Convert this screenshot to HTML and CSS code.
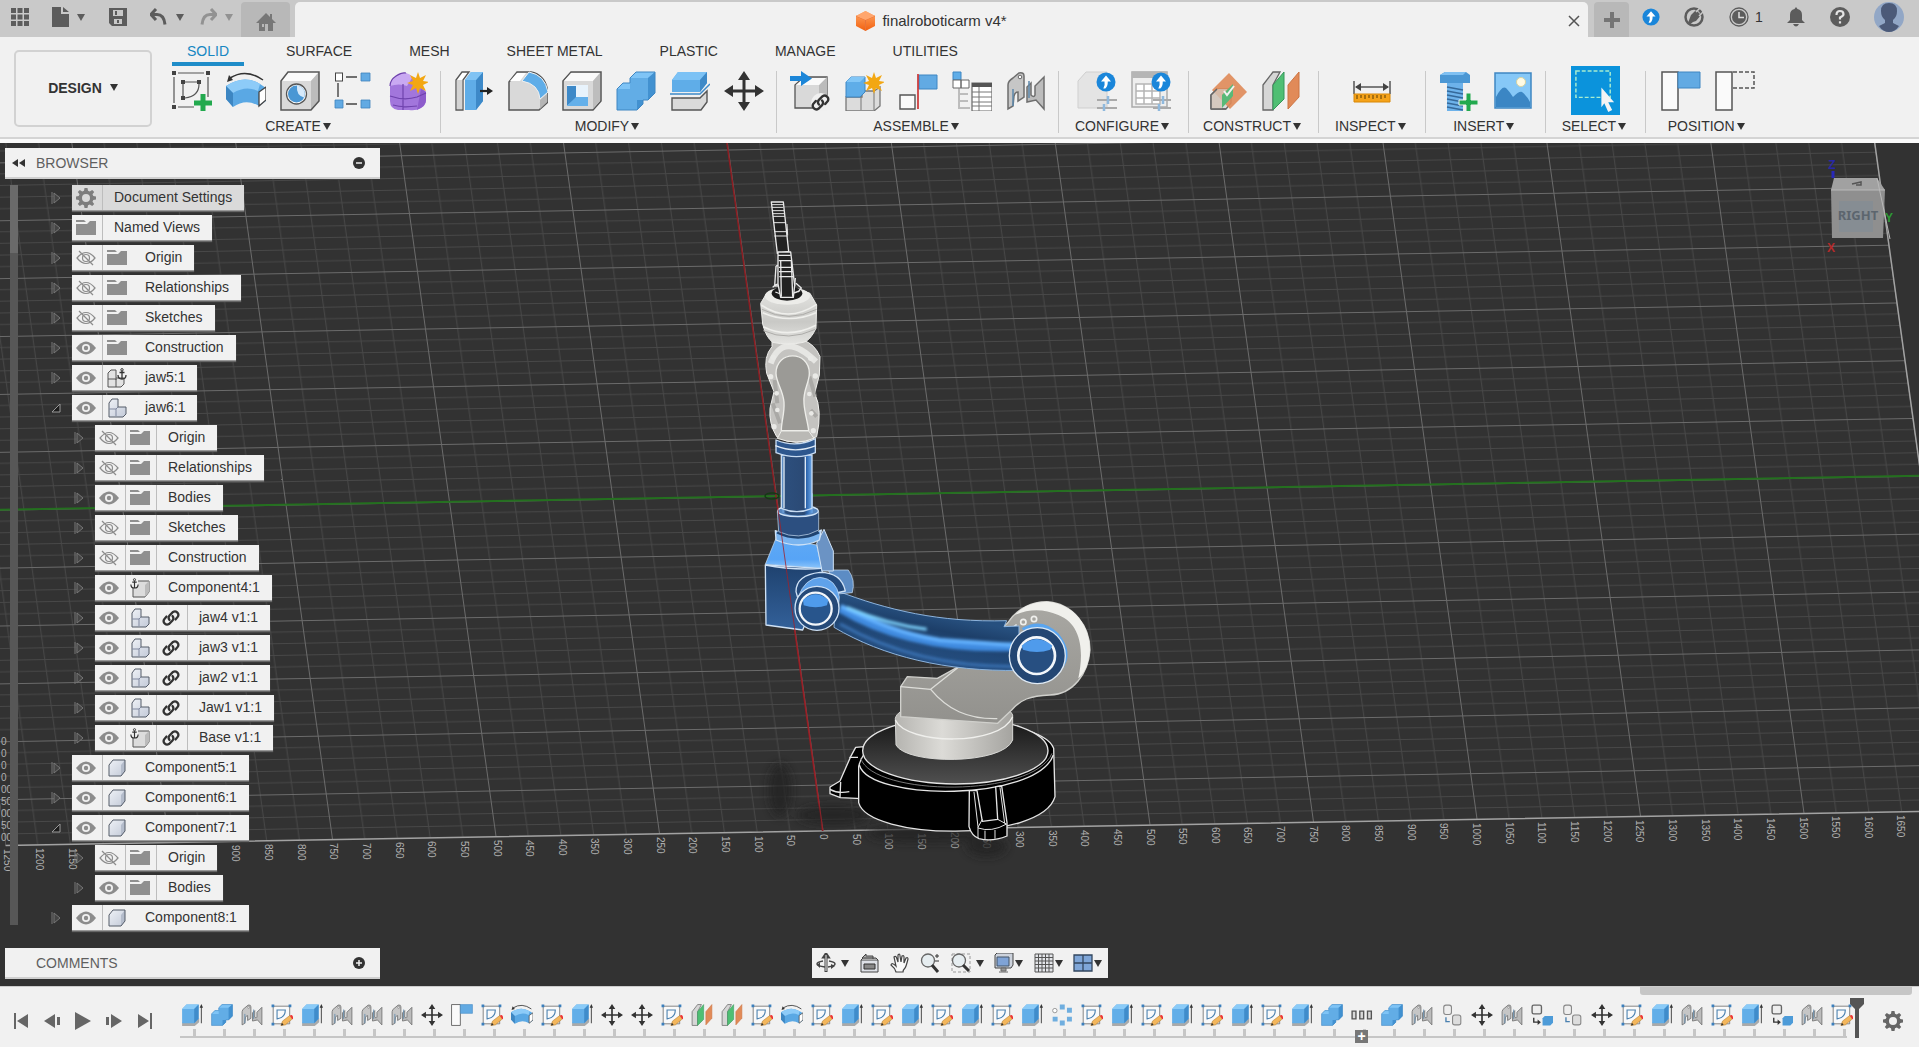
FILE: index.html
```html
<!DOCTYPE html>
<html lang="en">
<head>
<meta charset="utf-8">
<meta name="viewport" content="width=device-width, initial-scale=1">
<title>finalroboticarm v4*</title>
<link rel="stylesheet" href="styles.css">
</head>
<body>

<svg class="defs" aria-hidden="true">
  <defs>
    <linearGradient id="g-orange" x1="0" y1="0" x2="0" y2="1"><stop offset="0" stop-color="#ffa765"/><stop offset="1" stop-color="#f2600f"/></linearGradient>
    <linearGradient id="g-grey" x1="0" y1="0" x2="1" y2="1"><stop offset="0" stop-color="#eef1f6"/><stop offset="1" stop-color="#c3cad8"/></linearGradient>
  </defs>

  <!-- ribbon icons -->
  <symbol id="i-newsketch" viewBox="0 0 40 40">
    <path d="M6 2h26M2 6v26M6 36h16M36 6v20" fill="none" stroke="#555" stroke-width="1.2"/>
    <path d="M0 0h4v4H0zM34 0h4v4h-4zM0 34h4v4H0zM9 9h4v4H9zM25 9h4v4h-4zM9 25h4v4H9z" fill="#444"/>
    <path d="M13 11h12M11 13v12M27 13c0 8-5 13-14 14" fill="none" stroke="#555" stroke-width="1.2"/>
    <path d="M28.500 23h5v6.500H40v5h-6.500V41h-5v-6.500H22v-5h6.500z" fill="#22a94e"/>
  </symbol>
  <symbol id="i-revolve" viewBox="0 0 40 40">
    <path d="M0 15Q18 3 34 13L40 17V30L33 35Q20 27 7 36L0 28z" fill="#5aa8e4"/>
    <path d="M0 15Q18 3 34 13L32 20Q20 14 7 22z" fill="#8dcbf8"/>
    <path d="M0 15l7 7v14l-7-8z" fill="#3d86c2"/>
    <path d="M33 21l7-5v13l-7 6z" fill="#fff" stroke="#444" stroke-width="1.300"/>
    <path d="M4 7Q20-3 37 9" fill="none" stroke="#333" stroke-width="1.500"/><path d="M1 11l2-7 4 5z" fill="#333"/>
  </symbol>
  <symbol id="i-hole" viewBox="0 0 40 40">
    <path d="M1 10L8 1h31v29l-8 9H1z" fill="#d9d9d9"/><path d="M1 10L8 1h31l-8 9z" fill="#fafafa"/><path d="M31 10l8-9v29l-8 9z" fill="#bcbcbc"/>
    <path d="M1 10L8 1h31v29l-8 9H1z" fill="none" stroke="#555" stroke-width="1.500"/>
    <circle cx="16.500" cy="23" r="10" fill="#fff" stroke="#555" stroke-width="1.300"/><circle cx="16.500" cy="23" r="8.500" fill="#4a97d4"/><path d="M17 14.500a8.500 8.500 0 0 1 7 12q-8-2-7-12z" fill="#d6e9fa"/>
  </symbol>
  <symbol id="i-pattern" viewBox="0 0 40 40">
    <path d="M12 6h11M4 12v14M12 33h11" stroke="#444" stroke-width="1.400" fill="none"/>
    <rect x="1.500" y="2" width="7" height="8" fill="#fff" stroke="#444"/>
    <path d="M27 2h9v8h-9zM1 29h8v8H1zM27 29h9v8h-9z" fill="#62aae3" stroke="#3f83bd" stroke-width=".8"/>
  </symbol>
  <symbol id="i-form" viewBox="0 0 40 40">
    <path d="M2 15Q2 9 8 5T18 2l14 12 6 7v8q0 5-5 8-5 3-12 2H10q-8-1-8-9z" fill="#a276dc"/>
    <path d="M2 15Q3 8 9 5l6-3q8 0 9 5l-5 8q-8-3-17 0z" fill="#c9a9f2"/>
    <path d="M33 18l5 3v8q0 6-9 10z" fill="#8d5ccb"/>
    <path d="M2 25q14 5 27 1l9-4M15 13v26M2 15Q2 9 8 5T18 2M5 34q9 3 24 1" fill="none" stroke="#6f43ad" stroke-width="1.200"/>
    <path d="M30 1l2 6 6-3-3 6 6 1-6 3 3 6-6-3-2 6-2-6-6 3 3-6-6-2 6-2-3-6 6 3z" fill="#f3a712"/>
  </symbol>
  <symbol id="i-presspull" viewBox="0 0 40 40">
    <path d="M2 9l6-8h7L9 9v30H2z" fill="#fff" stroke="#555" stroke-width="1.300"/><path d="M3 9h5v29H3z" fill="#d3d3d3"/>
    <path d="M11 9l6-8h12v29l-7 9H11z" fill="#5fade8"/><path d="M22 9l7-8v29l-7 9z" fill="#3d89c8"/><path d="M11 9l6-8h12l-7 8z" fill="#80c3f4"/>
    <path d="M26 20h8" stroke="#222" stroke-width="2.200"/><path d="M33 16l6 4-6 4z" fill="#222"/>
  </symbol>
  <symbol id="i-fillet" viewBox="0 0 40 40">
    <path d="M1 11L9 1h14Q38 4 40 22v9l-9 8H1z" fill="#d9d9d9" stroke="#555" stroke-width="1.500"/>
    <path d="M2 10L9 2h9l-6 8z" fill="#fff"/><path d="M14 10l7-9q16 3 19 20l-8 7Q31 13 14 10z" fill="#5fade8" stroke="#f0f0f0" stroke-width="1"/>
    <path d="M32 29l7-6v8l-7 7z" fill="#b5b5b5"/>
  </symbol>
  <symbol id="i-shell" viewBox="0 0 40 40">
    <path d="M1 10L9 1h30v29l-8 9H1z" fill="#d9d9d9" stroke="#555" stroke-width="1.500"/><path d="M2 10l7-8h29l-7 8z" fill="#fafafa"/><path d="M31 10l7-8v28l-7 8z" fill="#bdbdbd"/>
    <path d="M5 14h21v21H5z" fill="#e8f3fc"/><path d="M5 15h9v12l-9 8z" fill="#3d89c8"/><path d="M14 26h12v9H5z" fill="#64b0ea"/>
  </symbol>
  <symbol id="i-combine" viewBox="0 0 40 40">
    <path d="M1 18l6-6h7V7l6-6h19v21l-7 7h-5v4l-6 6H1z" fill="#62ade6"/><path d="M14 7l6-6h19l-7 6zM1 18l6-6h7v6z" fill="#7fc4f6"/><path d="M32 7l7-6v21l-7 7zM21 29h6v4l-6 6z" fill="#4291d0"/>
    <path d="M1 18l6-6h7V7l6-6h19v21l-7 7h-5v4l-6 6H1z" fill="none" stroke="#3f86c2"/>
  </symbol>
  <symbol id="i-split" viewBox="0 0 40 40">
    <path d="M2 9l6-8h29v11l-7 9H2z" fill="#5fade8"/><path d="M2 9l6-8h29l-7 8z" fill="#7cc2f5"/><path d="M30 9l7-8v11l-7 9z" fill="#3d89c8"/>
    <path d="M0 23h30l10-10" fill="none" stroke="#3d89c8" stroke-width="1.500"/>
    <path d="M2 27h28l7-7v11l-6 8H2z" fill="#dadada" stroke="#555" stroke-width="1.400"/>
  </symbol>
  <symbol id="i-move" viewBox="0 0 40 40">
    <path d="M20 4v32M4 20h32" stroke="#333" stroke-width="3"/><path d="M20 0l6 9H14zM20 40l6-9H14zM0 20l9-6v12zM40 20l-9-6v12z" fill="#333"/>
  </symbol>
  <symbol id="i-link" viewBox="0 0 40 40">
    <g fill="none" stroke="#333" stroke-width="4.500" stroke-linecap="round"><path d="M17 24a7 7 0 0 1 0-9l7-7a7 7 0 0 1 10 9l-5 6"/><path d="M23 16a7 7 0 0 1 0 9l-7 7a7 7 0 0 1-10-9l5-6"/></g>
  </symbol>
  <symbol id="i-insertcomp" viewBox="0 0 40 40">
    <path d="M5 14l9-8h23v22l-8 9H5z" fill="#d9d9d9" stroke="#555" stroke-width="1.300"/><path d="M29 14l8-8v22l-8 9z" fill="#bbb"/><path d="M6 14l8-7h22l-7 7z" fill="#fafafa"/>
    <path d="M0 5h11V0l11 7.500L11 15v-5H0z" fill="#1c86d8"/><circle cx="31" cy="32" r="10" fill="#f0f0f0"/><use href="#i-link" x="20" y="21" width="21" height="21"/>
  </symbol>
  <symbol id="i-newcomp" viewBox="0 0 40 40">
    <path d="M2 26h16V20h12l6-4v19l-6 5H2z" fill="#dcdcdc" stroke="#777" stroke-width="1.300"/><path d="M17 24v15M30 21v18" stroke="#777"/>
    <path d="M2 11l5-5h14v15l-5 5H2z" fill="#5fade8" stroke="#3f86c2"/><path d="M2 11l5-5h14l-5 5z" fill="#82c6f6"/>
    <path d="M30 1l2 6 6-3-3 6 6 1-6 3 3 6-6-3-2 6-2-6-6 3 3-6-6-2 6-2-3-6 6 3z" fill="#f3a712"/>
  </symbol>
  <symbol id="i-joint" viewBox="0 0 40 40">
    <path d="M2 24h15v14H2z" fill="#fafafa" stroke="#555" stroke-width="1.400"/><path d="M21 4h18v14H21z" fill="#62aae3" stroke="#3f86c2"/><path d="M20 3v35" stroke="#c92a2a" stroke-width="1.600"/>
  </symbol>
  <symbol id="i-table" viewBox="0 0 40 40">
    <path d="M1 1h8v8H1z" fill="#5fade8" stroke="#3f86c2"/><path d="M1 9h8v8H1zM9 9h8v8H9z" fill="#fff" stroke="#666"/>
    <path d="M7 17v21M8 23h8M8 30h8M8 37h10" stroke="#888" fill="none"/><path d="M20 12h20v28H20z" fill="#fff" stroke="#666" stroke-width="1.200"/><path d="M20 12h20v4H20z" fill="#555"/>
    <path d="M20 21h20M20 26h20M20 31h20M20 35h20M27 16v24" stroke="#777"/>
  </symbol>
  <symbol id="i-jointorigin" viewBox="0 0 40 40">
    <path d="M2 38V14q0-4 5-7l6-5q5-1 5 3v21l-6 4v-9q-3 0-4 4l-1 10z" fill="#c6c6c6" stroke="#6e6e6e" stroke-width="1.500"/>
    <path d="M38 38V6l-9 9v9q-1 3-4 0V12l-4 4v15l9-2z" fill="#bcbcbc" stroke="#6e6e6e" stroke-width="1.500"/>
    <circle cx="14" cy="6" r="1.800" fill="#fff" stroke="#666"/><path d="M7 18v17M23 10v17" stroke="#5c88ac" stroke-width="1.500"/>
  </symbol>
  <symbol id="i-up" viewBox="0 0 20 20"><circle cx="10" cy="10" r="9.500" fill="#1a86da"/><path d="M10 3.500l5 6h-3.200q0 5-2.500 7h-2q2-3 1.200-7H5z" fill="#fff"/></symbol>
  <symbol id="i-config" viewBox="0 0 40 40">
    <path d="M1 10l8-9h21v36H1z" fill="#e4e4e4" stroke="#cfcfcf"/><path d="M20 29h20M20 37h20" stroke="#aaa" stroke-width="2"/><path d="M31 25v8M27 33v8" stroke="#8fb9dd" stroke-width="2.500"/><use href="#i-up" x="19" y="1" width="20" height="20"/>
  </symbol>
  <symbol id="i-configtable" viewBox="0 0 40 40">
    <path d="M1 1h35v35H1z" fill="#eee" stroke="#aaa" stroke-width="1.500"/><path d="M1 1h35v6H1z" fill="#b5b5b5"/><path d="M5 13h24v20H5zM5 20h24M5 27h24M13 13v20M21 13v20" fill="#fff" stroke="#b5b5b5" stroke-width="1.500"/>
    <path d="M22 29h18M22 37h18" stroke="#aaa" stroke-width="2"/><path d="M32 25v8M28 33v8" stroke="#8fb9dd" stroke-width="2.500"/><use href="#i-up" x="20" y="1" width="20" height="20"/>
  </symbol>
  <symbol id="i-offset" viewBox="0 0 40 40">
    <path d="M4 24l6-6h14v14l-5 6H4z" fill="#ddd" stroke="#666" stroke-width="1.300"/><path d="M22 2l18 19-17 17L5 19z" fill="#df8a58" opacity=".9"/><path d="M4 24l6-6h11l-6 6v14H4z" fill="#d3c4b8" opacity=".8"/><path d="M15 24l11-11v12L15 37z" fill="#58b978"/><path d="M17 20l3 4 7-9" fill="none" stroke="#f0f0f0" stroke-width="2"/><path d="M4 38V24l6-6M4 38h15" fill="none" stroke="#666" stroke-width="1.500"/>
  </symbol>
  <symbol id="i-plane" viewBox="0 0 40 40">
    <path d="M2 14L12 1h7l-7 13v25H2z" fill="#d6d6d6" stroke="#666" stroke-width="1.300"/><path d="M12 14L23 1v27L12 39z" fill="#4fbf73" stroke="#35975a"/><path d="M27 14L38 1v25L27 38z" fill="#e18a58" stroke="#cc7442"/>
  </symbol>
  <symbol id="i-measure" viewBox="0 0 40 40">
    <path d="M2 10v13M38 10v13M4 16h32" stroke="#555" stroke-width="1.500"/><path d="M3 16l6-4v8zM37 16l-6-4v8z" fill="#444"/><path d="M2 23h36v8H2z" fill="#f5a31a" stroke="#d88706"/><path d="M5 24v4M9 24v3M13 24v4M17 24v3M21 24v4M25 24v3M29 24v4M33 24v3" stroke="#5b3d05"/>
  </symbol>
  <symbol id="i-bolt" viewBox="0 0 40 40">
    <path d="M1 4l5-3h21l4 3v8H1z" fill="#4b97d4"/><path d="M6 1h21l-3 3H1z" fill="#7fc0f2"/><path d="M8 12h16v28H8z" fill="#6db2ea"/><path d="M8 16l16 3M8 20l16 3M8 24l16 3M8 28l16 3M8 32l16 3M8 36l16 3" stroke="#35699a" stroke-width="1.400"/>
    <path d="M27 22h5v7h7v5h-7v7h-5v-7h-7v-5h7z" fill="#22a94e" stroke="#f0f0f0"/>
  </symbol>
  <symbol id="i-image" viewBox="0 0 40 40">
    <path d="M2 2h36v35H2z" fill="#86c8f7" stroke="#3f86c2" stroke-width="1.500"/><circle cx="28" cy="11" r="4.500" fill="#fffbe4" stroke="#d8d3a0"/><path d="M3 26q6-12 10-9 4 4 7 9 6-6 9-5 5 4 8 10v5H3z" fill="#3b86c4"/>
  </symbol>
  <symbol id="i-select" viewBox="0 0 50 50">
    <path d="M0 0h50v50H0z" fill="#0b93dc"/><path d="M5 5h35v27H5z" fill="none" stroke="#a7edd0" stroke-width="1.500" stroke-dasharray="4 2"/><path d="M31 22l13 15h-6l4 8-4 2-4-9-3 4z" fill="#f4f4f4"/>
  </symbol>
  <symbol id="i-flag" viewBox="0 0 40 40"><path d="M1 1h16v38H1z" fill="#fafafa" stroke="#555" stroke-width="1.500"/><path d="M17 1h22v16H17z" fill="#62aae3" stroke="#3f86c2"/></symbol>
  <symbol id="i-revert" viewBox="0 0 40 40"><path d="M1 1h16v38H1z" fill="#fafafa" stroke="#555" stroke-width="1.500"/><path d="M18 1h21v16H18" fill="none" stroke="#555" stroke-width="1.500" stroke-dasharray="4 2"/></symbol>

  <!-- timeline icons -->
  <symbol id="i-extrude" viewBox="0 0 40 40"><path d="M2 33h22l9-7v7l-8 7H2z" fill="#aaa"/><path d="M2 9l8-8h22v26l-8 8H2z" fill="#62aee8"/><path d="M2 9l8-8h22l-8 8z" fill="#8acbf8"/><path d="M24 9l8-8v26l-8 8z" fill="#3f8ccb"/><path d="M37 5v30" stroke="#333" stroke-width="1.600"/><path d="M37 0l3 7h-6z" fill="#333"/></symbol>
  <symbol id="i-sketch" viewBox="0 0 40 40"><path d="M4 4h30v32H4z" fill="#fafafa" stroke="#777" stroke-width="1.600"/><path d="M1 1h5v5H1zM32 1h5v5h-5zM1 34h5v5H1z" fill="#3b7fbd"/><path d="M11 11h15q0 14-15 16z" fill="none" stroke="#4b81b0" stroke-width="2"/><path d="M18 39l3-8 13-10 5 6-13 11z" fill="#f3b65c" stroke="#b77e2d"/><path d="M34 21l4-1 3 4-2 4z" fill="#e33"/><path d="M18 39l2-5 3 4z" fill="#333"/></symbol>
  <symbol id="i-circular" viewBox="0 0 40 40"><path d="M16 1h9v9h-9zM29 7h9v9h-9zM29 23h9v9h-9zM16 30h9v9h-9zM3 23h9v9H3z" fill="#6faedf"/><circle cx="7" cy="12" r="4" fill="#fff" stroke="#888" stroke-width="1.500"/></symbol>
  <symbol id="i-group" viewBox="0 0 40 40"><path d="M2 13h7v14H2zM16 13h7v14h-7zM30 13h7v14h-7z" fill="#d9d9d9" stroke="#555" stroke-width="2.500"/></symbol>
  <symbol id="i-copies" viewBox="0 0 40 40"><rect x="5" y="2" width="14" height="17" rx="4" fill="#eee" stroke="#888" stroke-width="2"/><rect x="21" y="20" width="15" height="18" rx="4" fill="#ddd" stroke="#888" stroke-width="2"/><path d="M9 24v8h7" fill="none" stroke="#4b81b0" stroke-width="2.500"/></symbol>
  <symbol id="i-component" viewBox="0 0 40 40"><rect x="2" y="2" width="17" height="16" rx="3" fill="#eee" stroke="#666" stroke-width="2.500"/><path d="M21 26l4-4h15v12l-5 5H21z" fill="#4d9bd8"/><path d="M5 25v8h8" fill="none" stroke="#333" stroke-width="2.500"/><path d="M12 28l6 5-6 5z" fill="#333"/></symbol>

  <!-- browser tree icons -->
  <symbol id="i-gear" viewBox="0 0 20 20"><path fill-rule="evenodd" d="M8.500 0h3l.5 2.800 1.800.8L16.200 2l2 2-1.700 2.300.8 1.800 2.700.4v3l-2.700.5-.8 1.800 1.700 2.300-2 2-2.400-1.600-1.800.7-.5 2.800h-3L8 17.200l-1.800-.7L3.800 18l-2-2 1.700-2.300-.8-1.800L0 11.500v-3l2.700-.5.8-1.700L1.800 4l2-2 2.400 1.600L8 2.800zM10 6a4 4 0 1 0 0 8 4 4 0 0 0 0-8z"/></symbol>
  <symbol id="i-folder" viewBox="0 0 20 18"><path d="M0 1h8l2 2H0zM0 5h11l3-3h6v14H0z" fill="#8f8f8f"/></symbol>
  <symbol id="i-eye" viewBox="0 0 20 14"><path d="M0 7Q10-6 20 7 10 20 0 7z" fill="#8c8c8c"/><circle cx="10" cy="7" r="4" fill="#f1f1f1"/><circle cx="10" cy="7" r="2.200" fill="#8c8c8c"/></symbol>
  <symbol id="i-hidden" viewBox="0 0 20 14"><path d="M1 7Q10-4 19 7 10 18 1 7z" fill="none" stroke="#8c8c8c" stroke-width="1.200"/><circle cx="10" cy="7" r="3.500" fill="none" stroke="#8c8c8c" stroke-width="1.200"/><path d="M3 0l14 14" stroke="#8c8c8c" stroke-width="1.300"/></symbol>
  <symbol id="i-body" viewBox="0 0 20 20"><path d="M2 7l4-5h12v11l-4 5H2z" fill="url(#g-grey)"/><path d="M14 7l4-5v11l-4 5z" fill="#b4bccb"/><path d="M2 7l4-5h12v11l-4 5H2z" fill="none" stroke="#555c69" stroke-linejoin="round"/></symbol>
  <symbol id="i-assembly" viewBox="0 0 20 20"><path d="M2 5l3-4h6v8h8v7l-3 3H2z" fill="url(#g-grey)" stroke="#555c69" stroke-linejoin="round"/><path d="M2 11h7v7M11 9l-2 2" fill="none" stroke="#8089a0"/></symbol>
  <symbol id="i-anchor" viewBox="0 0 10 12"><path d="M5 3v8M2.500 4.500h5M1 7q0 4 4 4t4-4" fill="none" stroke="#333" stroke-width="1.300"/><circle cx="5" cy="1.800" r="1.200" fill="none" stroke="#333"/></symbol>
  <symbol id="i-grounded" viewBox="0 0 20 20"><path d="M3 8l4-5h12v11l-4 5H3z" fill="#dcdcdc" stroke="#555"/><path d="M15 7l4-4v11l-4 5z" fill="#bbb"/><path d="M0 0h8v10H0z" fill="#f1f1f1"/><use href="#i-anchor" x="0" y="0" width="9" height="11"/></symbol>
  <symbol id="i-groundedasm" viewBox="0 0 20 20"><path d="M1 5l3-3h5v8h8v6l-3 3H1z" fill="#e2e2e2" stroke="#555"/><path d="M1 11h8v8M9 10v2" fill="none" stroke="#555"/><use href="#i-anchor" x="10" y="0" width="10" height="12"/></symbol>
  <symbol id="i-closed" viewBox="0 0 10 12"><path d="M1 0v12M3 1l6 5-6 5z" fill="#444" stroke="#777"/></symbol>
  <symbol id="i-open" viewBox="0 0 10 12"><path d="M9 2v8H1z" fill="#1c1c1c" stroke="#999"/></symbol>
</svg>

<header class="topbar">
  <nav class="quick" aria-label="Quick access">
    <button aria-label="Data panel"><svg width="18" height="18" viewBox="0 0 18 18"><path d="M0 0h5v5H0zM6.500 0h5v5h-5zM13 0h5v5h-5zM0 6.500h5v5H0zM6.500 6.500h5v5h-5zM13 6.500h5v5h-5zM0 13h5v5H0zM6.500 13h5v5h-5zM13 13h5v5h-5z"/></svg></button>
    <button class="drop" aria-label="File"><svg width="17" height="20" viewBox="0 0 17 20"><path d="M0 0h9v7h8v13H0zM11 0l6 5h-6z"/></svg><i class="caret"></i></button>
    <button aria-label="Save"><svg width="18" height="18" viewBox="0 0 18 18"><path fill-rule="evenodd" d="M0 0h18v18H3l-3-3zM4 2v6h10V2zM5 11v5h8v-5zM6 3h2v4H6zM8 12h2v3H8z"/></svg></button>
    <button class="drop" aria-label="Undo"><svg width="18" height="18" viewBox="0 0 18 18"><path d="M6 1L1 6.500 6 12M2 6.500h5q7 0 8 10" fill="none" stroke="#5c5c5c" stroke-width="3"/></svg><i class="caret"></i></button>
    <button class="drop faded" aria-label="Redo"><svg width="18" height="18" viewBox="0 0 18 18"><path d="M12 1l5 5.500-5 5.500M16 6.500h-5q-7 0-8 10" fill="none" stroke="#5c5c5c" stroke-width="3"/></svg><i class="caret"></i></button>
  </nav>
  <button class="home" aria-label="Home"><svg width="20" height="18" viewBox="0 0 20 18"><path fill-rule="evenodd" d="M10 0l4 4V1h2v5l4 4h-3v8H3v-8H0zM6 11v3h2v-3zM9 11v7h3v-7z"/></svg></button>
  <div class="doctab">
    <span class="docname"><svg width="19" height="20" viewBox="0 0 19 20"><path d="M9.500 0L19 5v10l-9.500 5L0 15V5z" fill="url(#g-orange)"/><path d="M0 5l9.500 4L19 5M9.500 9v11" stroke="#e8743a" fill="none"/><path d="M9.500 0L19 5 9.500 9 0 5z" fill="#ffa66d"/></svg>finalroboticarm v4*</span>
    <button class="close" aria-label="Close tab"><svg width="12" height="12" viewBox="0 0 12 12"><path d="M1 1l10 10M11 1L1 11" stroke="#555" stroke-width="1.500"/></svg></button>
  </div>
  <button class="newtab" aria-label="New tab"><svg width="16" height="16" viewBox="0 0 16 16"><path d="M6 0h4v6h6v4h-6v6H6v-6H0V6h6z"/></svg></button>
  <nav class="status" aria-label="Account and status">
    <button aria-label="Updates"><svg width="18" height="18"><use href="#i-up"/></svg></button>
    <button aria-label="Extensions"><svg width="20" height="20" viewBox="0 0 20 20"><circle cx="10" cy="10" r="8.500" fill="none" stroke="#5c5c5c" stroke-width="2.500"/><path d="M7 8l5-5 5 5-5 6-3 1-4 3-1-2z"/><path d="M12 5l5-5M15 9l5-5" stroke="#c9c9c9" stroke-width="1.500"/></svg></button>
    <button class="jobs" aria-label="Job status"><svg width="20" height="20" viewBox="0 0 20 20"><circle cx="10" cy="10" r="9" fill="none" stroke="#5c5c5c" stroke-width="1.300"/><circle cx="10" cy="10" r="7"/><path d="M10 5v5.500h5" stroke="#ddd" stroke-width="1.500" fill="none"/></svg>1</button>
    <button aria-label="Notifications"><svg width="18" height="20" viewBox="0 0 18 20"><path d="M9 0l1.500 2Q15 3 15 8v5l3 3H0l3-3V8q0-5 4.500-6zM6 17h6q-3 5-6 0z"/></svg></button>
    <button aria-label="Help"><svg width="20" height="20" viewBox="0 0 20 20"><circle cx="10" cy="10" r="10"/><path d="M6.500 8q0-4 3.500-4t3.500 3.200Q13.500 9 10 10.500V12.500M10 14.300v2.300" fill="none" stroke="#e4e4e4" stroke-width="2.200"/></svg></button>
    <button class="avatar" aria-label="Profile"><svg width="30" height="30" viewBox="0 0 30 30"><circle cx="15" cy="15" r="15" fill="#92a7c6"/><path d="M15 1q8 0 8 8 0 6-4 9v3l6 3q-4 6-10 6T5 24l6-3v-3q-4-3-4-9 0-8 8-8z" fill="#4c5a78"/></svg></button>
  </nav>
</header>

<section class="ribbon">
  <button class="workspace">DESIGN <i class="caret"></i></button>
  <div class="ribbon-main">
    <nav class="tabs" aria-label="Toolbar tabs">
      <a href="#" class="active">SOLID</a><a href="#">SURFACE</a><a href="#">MESH</a><a href="#">SHEET METAL</a><a href="#">PLASTIC</a><a href="#">MANAGE</a><a href="#">UTILITIES</a>
    </nav>
    <div class="groups">
      <div class="group"><div class="tools">
        <button aria-label="Create sketch"><svg><use href="#i-newsketch"/></svg></button><button aria-label="Revolve"><svg><use href="#i-revolve"/></svg></button><button aria-label="Hole"><svg><use href="#i-hole"/></svg></button><button aria-label="Pattern"><svg><use href="#i-pattern"/></svg></button><button aria-label="Create form"><svg><use href="#i-form"/></svg></button>
      </div><button class="menu">CREATE<i class="caret"></i></button></div>
      <div class="group"><div class="tools">
        <button aria-label="Press pull"><svg><use href="#i-presspull"/></svg></button><button aria-label="Fillet"><svg><use href="#i-fillet"/></svg></button><button aria-label="Shell"><svg><use href="#i-shell"/></svg></button><button aria-label="Combine"><svg><use href="#i-combine"/></svg></button><button aria-label="Split body"><svg><use href="#i-split"/></svg></button><button aria-label="Move"><svg><use href="#i-move"/></svg></button>
      </div><button class="menu">MODIFY<i class="caret"></i></button></div>
      <div class="group"><div class="tools">
        <button aria-label="Insert component"><svg><use href="#i-insertcomp"/></svg></button><button aria-label="New component"><svg><use href="#i-newcomp"/></svg></button><button aria-label="Joint"><svg><use href="#i-joint"/></svg></button><button aria-label="Parts list"><svg><use href="#i-table"/></svg></button><button aria-label="Joint origin"><svg><use href="#i-jointorigin"/></svg></button>
      </div><button class="menu">ASSEMBLE<i class="caret"></i></button></div>
      <div class="group pair"><div class="tools">
        <button aria-label="Configure"><svg><use href="#i-config"/></svg></button><button aria-label="Configuration table"><svg><use href="#i-configtable"/></svg></button>
      </div><button class="menu">CONFIGURE<i class="caret"></i></button></div>
      <div class="group pair"><div class="tools">
        <button aria-label="Offset plane"><svg><use href="#i-offset"/></svg></button><button aria-label="Midplane"><svg><use href="#i-plane"/></svg></button>
      </div><button class="menu">CONSTRUCT<i class="caret"></i></button></div>
      <div class="group single"><div class="tools">
        <button aria-label="Measure"><svg><use href="#i-measure"/></svg></button>
      </div><button class="menu">INSPECT<i class="caret"></i></button></div>
      <div class="group"><div class="tools">
        <button aria-label="Insert fastener"><svg><use href="#i-bolt"/></svg></button><button aria-label="Insert image"><svg><use href="#i-image"/></svg></button>
      </div><button class="menu">INSERT<i class="caret"></i></button></div>
      <div class="group single"><div class="tools">
        <button aria-label="Select" class="chosen"><svg><use href="#i-select"/></svg></button>
      </div><button class="menu">SELECT<i class="caret"></i></button></div>
      <div class="group"><div class="tools">
        <button aria-label="Capture position"><svg><use href="#i-flag"/></svg></button><button aria-label="Revert position"><svg><use href="#i-revert"/></svg></button>
      </div><button class="menu">POSITION<i class="caret"></i></button></div>
    </div>
  </div>
</section>

<main class="viewport">
  <svg class="scene" viewBox="0 143 1919 843" preserveAspectRatio="xMidYMid slice" role="img" aria-label="Robotic arm model">
    <defs>
      <pattern id="grid" width="163.500" height="57.750" patternUnits="userSpaceOnUse">
        <path d="M32.700 0v58M65.400 0v58M98.100 0v58M130.800 0v58M0 11.550h164M0 23.100h164M0 34.650h164M0 46.200h164" stroke="#484848" fill="none"/>
        <path d="M.5 0v58M0 .5h164" stroke="#6b6b6b" fill="none"/>
      </pattern>
      <linearGradient id="tube" gradientUnits="userSpaceOnUse" x1="600" y1="345" x2="570" y2="495"><stop offset="0" stop-color="#27507f"/><stop offset=".3" stop-color="#1d3f69"/><stop offset=".6" stop-color="#214877"/><stop offset="1" stop-color="#264f82"/></linearGradient>
      <linearGradient id="cone" x1="0" y1="0" x2="0" y2="1"><stop offset="0" stop-color="#5fa9f5"/><stop offset=".7" stop-color="#57a4f6"/><stop offset="1" stop-color="#8cc5fb"/></linearGradient>
      <linearGradient id="block" x1="0" y1="0" x2="0" y2="1"><stop offset="0" stop-color="#1f426f"/><stop offset="1" stop-color="#33619a"/></linearGradient>
      <linearGradient id="post" x1="0" y1="0" x2="1" y2="0"><stop offset="0" stop-color="#7db4ef"/><stop offset=".1" stop-color="#2d4f7d"/><stop offset=".72" stop-color="#2b4a75"/><stop offset=".82" stop-color="#2d66ae"/><stop offset="1" stop-color="#6da9ea"/></linearGradient>
      <linearGradient id="white" x1="0" y1="0" x2="0" y2="1"><stop offset="0" stop-color="#e6e6e3"/><stop offset=".6" stop-color="#c9c9c6"/><stop offset="1" stop-color="#e4e4e1"/></linearGradient>
      <linearGradient id="stone" x1="0" y1="0" x2="0" y2="1"><stop offset="0" stop-color="#a9a8a3"/><stop offset="1" stop-color="#92918d"/></linearGradient>
      <linearGradient id="plinth" x1="0" y1="0" x2="1" y2="0"><stop offset="0" stop-color="#b5b4b0"/><stop offset=".4" stop-color="#dcdbd7"/><stop offset="1" stop-color="#a5a4a0"/></linearGradient>
      <linearGradient id="disc" x1="0" y1="0" x2="0" y2="1"><stop offset="0" stop-color="#141414"/><stop offset="1" stop-color="#505050"/></linearGradient>
      <filter id="soft"><feGaussianBlur stdDeviation="12"/></filter>
      <filter id="sheen" x="-10%" y="-40%" width="120%" height="180%"><feGaussianBlur stdDeviation="5"/></filter>
    </defs>
    <g transform="matrix(1 -.0177 .139 1 776 496)">
      <path d="M-817-404.250H1145V335H-817z" fill="url(#grid)"/>
      <path d="M-817 335H1145V-404" fill="none" stroke="#a2a2a2" stroke-width="1.500"/>
      <path d="M-817 0H1145" stroke="#24701f" stroke-width="2"/>
      <path d="M0-404V335" stroke="#8c1d22" stroke-width="1.500"/>
    </g>
    <g id="ruler" class="ruler"></g>

    <!-- base, shoulder and lower arm -->
    <g transform="translate(740 500) scale(.33333)" stroke-linejoin="round">
      <g filter="url(#soft)" fill="#202020" opacity=".75"><ellipse cx="120" cy="870" rx="35" ry="80"/><ellipse cx="560" cy="1000" rx="180" ry="28"/><ellipse cx="740" cy="1040" rx="60" ry="30"/><ellipse cx="280" cy="945" rx="110" ry="30"/></g>
      <g stroke="#e4e4e4" stroke-width="4" fill="#000">
        <path d="M347 742l26-2-8 156-64-3-31-12v-20l30-18 32-73z"/><path d="M302 846l-2 46M270 868q25 14 58 7M328 772h26" fill="none"/>
        <path d="M356 800v108C385 1020 905 1030 945 890l-4-145C900 640 390 630 356 800z"/>
        <path d="M358 795C390 905 890 905 940 765" fill="none"/>
        <ellipse cx="646" cy="752" rx="278" ry="100" fill="url(#disc)"/>
        <path d="M362 775C400 890 880 895 936 760" fill="none" stroke-width="3" stroke="#777"/>
        <path d="M688 872l-1 108q8 28 30 36 40 10 84-8v-40l-16-110-18 2 6 98-46 6-16-92z"/><path d="M702 876l12 104v34M780 862l14 108M714 984q40 14 86-12M735 992v26M765 990v26M727 958l-13 24M773 958l26 14" fill="none" stroke-width="3"/>
      </g>
      <path d="M466 655l2 80C500 795 790 795 818 720v-75C790 580 480 590 466 655z" fill="url(#plinth)" stroke="#d7d7d4" stroke-width="3"/>
      <path d="M466 660C500 735 780 740 818 650" fill="none" stroke="#efefec" stroke-width="4"/>
      <path d="M482 560l20-30 90 5 65-36 145-129C832 322 880 305 920 305c80 5 130 75 130 145-5 70-50 133-120 135-60 2-90 15-115 45l-42 40-291-20z" fill="url(#stone)" stroke="#d0d0cc" stroke-width="4"/>
      <path d="M825 345C850 315 885 305 925 305c80 8 125 75 125 145-3 45-20 75-35 85 15-70 15-160-60-190-45-20-90-18-130 0z" fill="#f0f0ec"/>
      <path d="M482 560l90 8c50 60 110 90 200 88M572 568l85-68" fill="none" stroke="#ddddd9" stroke-width="4"/>
      <g fill="none" stroke="#efefec" stroke-width="5"><circle cx="850" cy="366" r="8"/><circle cx="882" cy="357" r="8"/><path d="M818 382l12-8"/></g>
      <path d="M290 272C440 330 600 368 800 362l-8 18 45-2v133C620 515 430 470 282 382z" fill="url(#tube)" stroke="#8db4de" stroke-width="3"/>
      <g fill="none" filter="url(#sheen)">
        <path d="M300 325C400 385 560 450 830 440" stroke="#3f8be0" stroke-width="26"/>
        <path d="M302 318C400 365 480 400 600 420T830 436" stroke="#63b2ff" stroke-width="12"/>
        <path d="M320 322C400 355 480 378 560 388" stroke="#7fd4ff" stroke-width="9"/>
        <path d="M300 372C430 445 600 500 820 500" stroke="#3a73b5" stroke-width="8"/>
      </g>
      <path d="M845 385q60-35 110 15 50 60 10 110z" fill="#5aa5ef"/>
      <circle cx="892" cy="467" r="84" fill="#234673" stroke="#dfeaf5" stroke-width="4"/><circle cx="890" cy="467" r="55" fill="#274f81" stroke="#f2f6fa" stroke-width="8"/><path d="M845 437q45-40 92 0l-6 12q-40 14-82 0z" fill="#4f9bec"/>
      <!-- elbow block -->
      <g stroke="#cfe2f6" stroke-width="4">
        <path d="M265 210l60 0q22 30 12 68l-45 4z" fill="#5c8cc4" stroke-width="2"/>
        <path d="M76 195l170 10 2 40-60 145-110-15z" fill="url(#block)"/>
        <path d="M108 115l122 20 16 70-170-12z" fill="url(#cone)" stroke-width="2"/>
        <path d="M230 130l22-42 28 65v60l-34 0z" fill="#6b93c4" stroke-width="3"/>
        <path d="M76 195Q160 212 246 205" fill="none"/>
        <path d="M106 92q70 34 138-2l-6 30q-60 30-130 0z" fill="#7ab4ef"/>
        <path d="M112 96q62 30 124 0" fill="none" stroke="#1f4370" stroke-width="10"/>
        <path d="M112 35l4 60q60 28 120-5V35z" fill="#2c4f80" stroke-width="2"/><ellipse cx="174" cy="33" rx="61" ry="17" fill="#5686bf"/>
        <path d="M168 275q0-50 72-58 64 0 76 56l-140 30z" fill="#234a7c"/>
        <path d="M175 290q20-55 65-58 48 4 58 58l-4 55-110-30z" fill="#5fa2ea" stroke-width="2"/>
        <circle cx="231" cy="325" r="66" fill="#254a79"/><circle cx="227" cy="326" r="48" fill="#28558c" stroke="#f2f6fa" stroke-width="7"/>
      </g><path d="M189 300q38-34 76 0l-4 16q-34 12-70 0z" fill="#4f9bec"/>
      <path d="M174 24h100" stroke="none" fill="none"/>
      <path d="M128-20h90v58q-45 16-90 0z" fill="url(#post)"/>
    </g>

    <!-- forearm, wrist and gripper -->
    <g transform="translate(720 180) scale(.33333)" stroke-linejoin="round">
      <path d="M184 825h92v160q-45 20-92 0z" fill="url(#post)" stroke="#c8dcf2" stroke-width="4"/><path d="M192 830v155M256 830v155" stroke="#dfeaf5" stroke-width="4"/>
      <path d="M168 780q60 25 118-4v42q-55 24-118 0z" fill="#2d578e" stroke="#c8dcf2" stroke-width="4"/><path d="M166 797q60 25 122 0" fill="none" stroke="#dfeaf5" stroke-width="4"/>
      <path d="M156 480Q270 455 300 530l-2 55-14 55q24 50 6 130-60 34-120 0-24-40-20-85l12-50-22-55q-10-50 16-80z" fill="#c4c3c0" stroke="#f0f0ed" stroke-width="3"/>
      <path d="M164 600l8 70M268 590l18 60M158 670l22 60M272 690l18 20" stroke="#9a9995" stroke-width="12" opacity=".6"/>
      <path d="M152 550Q190 450 288 545" fill="none" stroke="#e6e6e3" stroke-width="18"/>
      <path d="M168 580c0-70 100-70 100 0 0 30-20 50-16 90 2 30 12 60 14 82h-82c0-30 10-50 8-85-2-35-24-60-24-87z" fill="#9b9a96" stroke="#edede9" stroke-width="4"/>
      <path d="M184 753h82l16 22q-52 22-110 0z" fill="#bab9b5" stroke="#edede9" stroke-width="3"/>
      <g fill="#e9e9e6"><circle cx="160" cy="532" r="8"/><circle cx="272" cy="535" r="8"/><circle cx="152" cy="590" r="8"/><circle cx="286" cy="588" r="8"/><circle cx="170" cy="640" r="7"/><circle cx="268" cy="642" r="7"/><circle cx="172" cy="690" r="7"/><circle cx="274" cy="700" r="7"/><circle cx="162" cy="740" r="8"/><circle cx="280" cy="752" r="8"/></g>
      <path d="M122 370l18-30q70-30 130 0l20 35-2 70q-18 38-38 42-45 10-92 0-20-15-30-55z" fill="url(#white)" stroke="#ededea" stroke-width="3"/>
      <path d="M124 375q80 55 166-2M128 398q80 35 160 0M130 440q75 38 158-4" fill="none" stroke="#efefec" stroke-width="5"/><path d="M126 388q80 42 164 0M130 452q75 34 156-4" fill="none" stroke="#adaca9" stroke-width="3"/>
      <ellipse cx="202" cy="348" rx="68" ry="26" fill="#ecece9"/><ellipse cx="201" cy="340" rx="46" ry="22" fill="#1c1c1c"/>
      <g fill="#222" stroke="#e9e9e9" stroke-width="4">
        <path d="M154 66h36l16 148-34 6z" /><path d="M155 74h34M156 82h34M157 92h35M158 101h36M159 109h36M161 128h36M163 155h38M163 168h40M201 132l2 34" stroke-width="3" fill="none"/>
        <path d="M168 258l8-2M168 258l-4 60 60-2 2-22M158 322q10-14 20-8M228 310l16 14-10 12M166 336q30 16 74-4" fill="none"/>
        <path d="M174 216h38l12 100-4 36h-38l-8-40z"/><path d="M174 226h38M176 242h38M177 262h42M177 275h42M178 290h44M182 240l2 110M214 240l4 110" stroke-width="4" fill="none"/>
      </g>
    </g>
    <path d="M776.700 500L823 831" stroke="#a0222b" stroke-width="1" opacity=".8"/>
    <ellipse cx="772" cy="496" rx="7" ry="3" fill="none" stroke="#163a16" stroke-width="1.500"/>

    <!-- orientation cube -->
    <g>
      <path d="M1834 178h43l8 12H1831z" fill="#a1a1a1"/><path d="M1831 190h54l-2 48h-51z" fill="#8f8f8f"/><path d="M1839 201h34v31h-34z" fill="#868d93"/>
      <path d="M1831 190h54M1877 178l13 61" stroke="#b9b9b9" fill="none"/><path d="M1852 184l9-2v3h-5" stroke="#555" fill="none" stroke-width="1.500"/>
      <text class="face" x="1858" y="220" text-anchor="middle">RIGHT</text>
      <path d="M1833 178v-7" stroke="#2828b8" stroke-width="3"/>
      <text class="axis z" x="1832" y="169" text-anchor="middle">Z</text><text class="axis x" x="1831" y="252" text-anchor="middle">X</text><text class="axis y" x="1889" y="222" text-anchor="middle">Y</text>
    </g>
  </svg>

  <aside class="browser">
    <header class="panel">
      <button aria-label="Collapse browser"><svg width="13" height="8" viewBox="0 0 13 8"><path d="M6 0v8L0 4zM13 0v8L7 4z" fill="#333"/></svg></button>
      <h2>BROWSER</h2>
      <button aria-label="Minimise"><svg width="12" height="12" viewBox="0 0 12 12"><circle cx="6" cy="6" r="6" fill="#333"/><path d="M3 6h6" stroke="#f1f1f1" stroke-width="1.500"/></svg></button>
    </header>
    <div class="tree-area">
      <div class="scrollbar"></div>
      <ul class="tree">
        <li><svg class="tw"><use href="#i-closed"/></svg><div class="node current"><b><svg class="gear"><use href="#i-gear"/></svg></b><span>Document Settings</span></div></li>
        <li><svg class="tw"><use href="#i-closed"/></svg><div class="node"><b><svg><use href="#i-folder"/></svg></b><span>Named Views</span></div></li>
        <li><svg class="tw"><use href="#i-closed"/></svg><div class="node"><b><svg><use href="#i-hidden"/></svg></b><b><svg><use href="#i-folder"/></svg></b><span>Origin</span></div></li>
        <li><svg class="tw"><use href="#i-closed"/></svg><div class="node"><b><svg><use href="#i-hidden"/></svg></b><b><svg><use href="#i-folder"/></svg></b><span>Relationships</span></div></li>
        <li><svg class="tw"><use href="#i-closed"/></svg><div class="node"><b><svg><use href="#i-hidden"/></svg></b><b><svg><use href="#i-folder"/></svg></b><span>Sketches</span></div></li>
        <li><svg class="tw"><use href="#i-closed"/></svg><div class="node"><b><svg><use href="#i-eye"/></svg></b><b><svg><use href="#i-folder"/></svg></b><span>Construction</span></div></li>
        <li><svg class="tw"><use href="#i-closed"/></svg><div class="node"><b><svg><use href="#i-eye"/></svg></b><b><svg><use href="#i-groundedasm"/></svg></b><span>jaw5:1</span></div></li>
        <li><svg class="tw"><use href="#i-open"/></svg><div class="node"><b><svg><use href="#i-eye"/></svg></b><b><svg><use href="#i-assembly"/></svg></b><span>jaw6:1</span></div>
          <ul>
            <li><svg class="tw"><use href="#i-closed"/></svg><div class="node"><b><svg><use href="#i-hidden"/></svg></b><b><svg><use href="#i-folder"/></svg></b><span>Origin</span></div></li>
            <li><svg class="tw"><use href="#i-closed"/></svg><div class="node"><b><svg><use href="#i-hidden"/></svg></b><b><svg><use href="#i-folder"/></svg></b><span>Relationships</span></div></li>
            <li><svg class="tw"><use href="#i-closed"/></svg><div class="node"><b><svg><use href="#i-eye"/></svg></b><b><svg><use href="#i-folder"/></svg></b><span>Bodies</span></div></li>
            <li><svg class="tw"><use href="#i-closed"/></svg><div class="node"><b><svg><use href="#i-hidden"/></svg></b><b><svg><use href="#i-folder"/></svg></b><span>Sketches</span></div></li>
            <li><svg class="tw"><use href="#i-closed"/></svg><div class="node"><b><svg><use href="#i-hidden"/></svg></b><b><svg><use href="#i-folder"/></svg></b><span>Construction</span></div></li>
            <li><svg class="tw"><use href="#i-closed"/></svg><div class="node"><b><svg><use href="#i-eye"/></svg></b><b><svg><use href="#i-grounded"/></svg></b><span>Component4:1</span></div></li>
            <li><svg class="tw"><use href="#i-closed"/></svg><div class="node"><b><svg><use href="#i-eye"/></svg></b><b><svg><use href="#i-assembly"/></svg></b><b><svg><use href="#i-link"/></svg></b><span>jaw4 v1:1</span></div></li>
            <li><svg class="tw"><use href="#i-closed"/></svg><div class="node"><b><svg><use href="#i-eye"/></svg></b><b><svg><use href="#i-assembly"/></svg></b><b><svg><use href="#i-link"/></svg></b><span>jaw3 v1:1</span></div></li>
            <li><svg class="tw"><use href="#i-closed"/></svg><div class="node"><b><svg><use href="#i-eye"/></svg></b><b><svg><use href="#i-assembly"/></svg></b><b><svg><use href="#i-link"/></svg></b><span>jaw2 v1:1</span></div></li>
            <li><svg class="tw"><use href="#i-closed"/></svg><div class="node"><b><svg><use href="#i-eye"/></svg></b><b><svg><use href="#i-assembly"/></svg></b><b><svg><use href="#i-link"/></svg></b><span>Jaw1 v1:1</span></div></li>
            <li><svg class="tw"><use href="#i-closed"/></svg><div class="node"><b><svg><use href="#i-eye"/></svg></b><b><svg><use href="#i-grounded"/></svg></b><b><svg><use href="#i-link"/></svg></b><span>Base v1:1</span></div></li>
          </ul>
        </li>
        <li><svg class="tw"><use href="#i-closed"/></svg><div class="node"><b><svg><use href="#i-eye"/></svg></b><b><svg><use href="#i-body"/></svg></b><span>Component5:1</span></div></li>
        <li><svg class="tw"><use href="#i-closed"/></svg><div class="node"><b><svg><use href="#i-eye"/></svg></b><b><svg><use href="#i-body"/></svg></b><span>Component6:1</span></div></li>
        <li><svg class="tw"><use href="#i-open"/></svg><div class="node"><b><svg><use href="#i-eye"/></svg></b><b><svg><use href="#i-body"/></svg></b><span>Component7:1</span></div>
          <ul>
            <li><svg class="tw"><use href="#i-closed"/></svg><div class="node"><b><svg><use href="#i-hidden"/></svg></b><b><svg><use href="#i-folder"/></svg></b><span>Origin</span></div></li>
            <li><svg class="tw"><use href="#i-closed"/></svg><div class="node"><b><svg><use href="#i-eye"/></svg></b><b><svg><use href="#i-folder"/></svg></b><span>Bodies</span></div></li>
          </ul>
        </li>
        <li><svg class="tw"><use href="#i-closed"/></svg><div class="node"><b><svg><use href="#i-eye"/></svg></b><b><svg><use href="#i-body"/></svg></b><span>Component8:1</span></div></li>
      </ul>
    </div>
  </aside>

  <div class="bottom">
    <section class="panel comments">
      <h2>COMMENTS</h2>
      <button aria-label="Expand comments"><svg width="12" height="12" viewBox="0 0 12 12"><circle cx="6" cy="6" r="6" fill="#333"/><path d="M3 6h6M6 3v6" stroke="#f1f1f1" stroke-width="1.500"/></svg></button>
    </section>
    <nav class="viewtools" aria-label="View controls">
      <button class="drop" aria-label="Orbit"><svg viewBox="0 0 20 20"><path d="M10 1v18M8 4l2-3 2 3z" stroke="#444" stroke-width="3" fill="#444"/><path d="M10 2v16" stroke="#eee"/><path d="M7 8q-6 1-6 3t8 3M13 8q6 1 6 3t-7 3" fill="none" stroke="#444" stroke-width="1.500"/><path d="M4 9l-3 3 3 3zM15 11l4 2-4 3z" fill="#444"/></svg><i class="caret"></i></button>
      <button aria-label="Look at"><svg viewBox="0 0 20 20"><path d="M2 7h17v12H2z" fill="#dde0e6" stroke="#444"/><path d="M5 11h11v5H5z" fill="#888" stroke="#333"/><path d="M3 5l4-4v2h7v3M2 7l2-2h13l2 2" fill="#aaa" stroke="#444"/></svg></button>
      <button aria-label="Pan"><svg viewBox="0 0 20 20"><path d="M6 19q-1-4-5-7 1-3 5 1L4 4q2-2 3 2l1 3 0-7q2-2 2 1l1 6 1-6q2-1 2 1v6l2-5q2-1 2 1-2 8-3 9-2 2-2 4z" fill="#fafafa" stroke="#444" stroke-width="1.200"/></svg></button>
      <button aria-label="Zoom"><svg viewBox="0 0 20 20"><circle cx="8" cy="7.500" r="6.500" fill="#e6edf0" stroke="#666" stroke-width="1.300"/><path d="M12 12l6 7" stroke="#333" stroke-width="3"/><path d="M15 3h4M17 1v4M15 8h4" stroke="#333"/></svg></button>
      <button class="drop" aria-label="Fit"><svg viewBox="0 0 20 20"><path d="M1 1h18v18H1z" fill="none" stroke="#999" stroke-dasharray="3 2"/><circle cx="8" cy="7.500" r="6.500" fill="#e6edf0" stroke="#666" stroke-width="1.300"/><path d="M12 12l6 6" stroke="#333" stroke-width="3"/></svg><i class="caret"></i></button>
      <button class="drop tight" aria-label="Display settings"><svg viewBox="0 0 20 20"><path d="M1 2l2-2h16v12l-2 3H1z" fill="#ccd2dc" stroke="#444"/><path d="M3 4h12v9H3z" fill="#7fa3d6" stroke="#456"/><path d="M7 15h5v3H7zM5 19h9" fill="#999" stroke="#666"/></svg><i class="caret"></i></button>
      <button class="drop tight" aria-label="Grid and snaps"><svg viewBox="0 0 20 20"><path d="M1 1h18v18H1zM1 4.500h18M1 8h18M1 11.500h18M1 15h18M4.500 1v18M8 1v18M11.500 1v18M15 1v18" fill="#e4e6ea" stroke="#555"/></svg><i class="caret"></i></button>
      <button class="drop tight" aria-label="Viewports"><svg viewBox="0 0 20 20"><path d="M1 2h18v16H1zM10 2v16M1 10h18" fill="#7fa6d8" stroke="#33475f" stroke-width="1.300"/></svg><i class="caret"></i></button>
    </nav>
  </div>
</main>

<footer class="timeline">
  <nav class="playback" aria-label="Timeline playback">
    <button aria-label="Go to start"><svg viewBox="0 0 16 18"><path d="M1 1h2v16H1zM15 2v14L4 9z"/></svg></button>
    <button aria-label="Step back"><svg viewBox="0 0 16 18"><path d="M11 2v14L0 9zM13 5h3v8h-3z"/></svg></button>
    <button aria-label="Play"><svg viewBox="0 0 16 18"><path d="M0 0l16 9-16 9z"/></svg></button>
    <button aria-label="Step forward"><svg viewBox="0 0 16 18"><path d="M5 2v14l11-7zM0 5h3v8H0z"/></svg></button>
    <button aria-label="Go to end"><svg viewBox="0 0 16 18"><path d="M13 1h2v16h-2zM1 2v14l11-7z"/></svg></button>
  </nav>
  <ol class="features" id="features"></ol>
  <div class="marker"><svg width="14" height="40" viewBox="0 0 14 40"><path d="M0 0h14v6l-5 5v29H5V11L0 6z" fill="#555"/></svg></div>
  <button class="settings" aria-label="Timeline settings"><svg width="20" height="20"><use href="#i-gear"/></svg></button>
  <div class="hscroll"></div>
</footer>

<script src="app.js"></script>
</body>
</html>
```

FILE: styles.css
```css
* { box-sizing: border-box; }
body {
  margin: 0;
  height: 100vh;
  display: flex;
  flex-direction: column;
  overflow: hidden;
  font: 14px/20px "Liberation Sans", Arial, sans-serif;
  color: #333;
  background: #f1f1f1;
}
button {
  font: inherit;
  color: inherit;
  background: none;
  border: 0;
  padding: 0;
  display: flex;
  align-items: center;
  justify-content: center;
}
ul, ol { list-style: none; margin: 0; padding: 0; }
h2 { margin: 0; font-size: 14px; font-weight: 400; color: #5f5f5f; }
svg { display: block; flex: none; }
.defs { position: absolute; width: 0; height: 0; }
.caret {
  border: 4px solid transparent;
  border-top: 7px solid #333;
  border-bottom: 0;
}

/* title bar */
.topbar { display: flex; height: 37px; flex: none; background: #c9c9c9; fill: #5c5c5c; }
.quick { display: flex; align-items: center; width: 241px; padding: 0 8px 3px 11px; justify-content: space-between; }
.quick .drop { gap: 8px; }
.quick .caret { border-top-color: #5c5c5c; }
.quick .faded { opacity: .5; margin-left: -8px; }
.home { width: 49px; margin: 2px 5px 0 0; padding-top: 4px; background: #b8b8b8; border-radius: 4px 4px 0 0; fill: #777; }
.doctab { flex: 1; display: flex; align-items: center; margin-top: 2px; padding: 2px 8px 0 0; background: #f1f1f1; border-radius: 5px 5px 0 0; }
.docname { flex: 1; display: flex; justify-content: center; align-items: center; gap: 7px; font-size: 15px; }
.newtab { width: 35px; margin: 2px 0 0 6px; background: #b8b8b8; border-radius: 4px 4px 0 0; fill: #757575; }
.status { display: flex; align-items: center; justify-content: space-between; width: 290px; padding: 0 15px 3px 13px; }
.jobs { gap: 6px; }

/* ribbon */
.ribbon { display: flex; flex: none; height: 106px; background: #f1f1f1; border-bottom: 4px solid #fafafa; box-shadow: inset 0 -2px #d4d4d4; }
.workspace { width: 138px; height: 77px; margin: 13px 13px 0 14px; padding-bottom: 2px; gap: 8px; font-weight: 700; border: 2px solid #d2d2d2; border-radius: 5px; flex: none; }
.ribbon-main { flex: 1; min-width: 0; }
.tabs { display: flex; gap: 27px; padding-left: 7px; }
.tabs a { height: 29px; padding: 4px 15px 0; color: #333; text-decoration: none; border-bottom: 4px solid transparent; line-height: 20px; white-space: nowrap; }
.tabs .active { color: #1787c2; border-color: #1f8dc9; }
.groups { display: flex; }
.group { padding: 0 6px; background: linear-gradient(#c9c9c9, #c9c9c9) right 5px / 1px 62px no-repeat; }
.group:first-child { padding-left: 0; }
.group:last-child { padding-left: 8px; background: none; }
.pair { padding: 0 11px; }
.single { padding: 0 16px; }
.tools { display: flex; justify-content: center; }
.tools button { width: 54px; height: 49px; }
.tools svg { width: 40px; height: 40px; }
.tools .chosen svg { width: 49px; height: 49px; }
.menu { width: 100%; height: 22px; gap: 2px; padding-right: 4px; white-space: nowrap; }

/* viewport */
.viewport { position: relative; flex: 1; min-height: 0; display: flex; flex-direction: column; justify-content: space-between; padding: 5px 5px 7px; background: #323232; }
.scene { position: absolute; inset: 0; width: 100%; height: 100%; }
.ruler { font-size: 10px; font-family: "Liberation Sans Narrow", "Liberation Sans", sans-serif; fill: #b0b0b0; }
.face { font: 700 13px "Noto Sans", sans-serif; fill: #5c656e; }
.axis { font-size: 12px; font-weight: 700; }
.axis.x { fill: #b52a2a; }
.axis.y { fill: #2e9a35; }
.axis.z { fill: #2828a8; }
.browser, .bottom { position: relative; }
.panel { display: flex; align-items: center; width: 375px; height: 31px; padding: 0 15px 0 7px; background: #f1f1f1; border-bottom: 2px solid #d0d0d0; }
.panel h2 { flex: 1; margin-left: 11px; }
.comments h2 { margin-left: 24px; }
.tree-area { display: flex; padding: 6px 0 0 5px; }
.scrollbar { width: 8px; margin-bottom: 10px; background: linear-gradient(#6a6a6a 0 68px, #575757 68px); }
.tree { margin-left: 33px; }
.tree ul { margin-left: 23px; }
.tree li { display: grid; grid-template-columns: 10px 1fr; column-gap: 11px; align-items: center; justify-items: start; }
.tree li > ul { grid-column: 1 / -1; }
.tw { width: 10px; height: 12px; margin-bottom: 5px; }
.node { display: flex; height: 25px; margin-bottom: 5px; background: #f1f1f1; box-shadow: 0 1px 0 #999, 0 2px 1px #666; }
.node.current { background: #dadada; }
.node b { width: 31px; display: flex; align-items: center; justify-content: center; padding-right: 3px; }
.node b:first-child, .tree ul .node b { border-right: 1px solid #bdbdbd; }
.node b svg { width: 20px; height: 20px; fill: #7d7d7d; }
.node span { padding: 0 12px 0 11px; line-height: 25px; white-space: nowrap; }
.bottom { display: grid; grid-template-columns: 1fr auto 1fr; }
.viewtools { display: flex; align-items: center; width: 296px; height: 30px; padding: 0 5px 0 4px; justify-content: space-between; background: #f1f1f1; }
.viewtools svg { width: 20px; height: 20px; }
.viewtools .drop { gap: 5px; }
.viewtools .tight { gap: 1px; }

/* timeline */
.timeline { position: relative; display: flex; flex: none; height: 61px; background: #f1f1f1; border-top: 1px solid #ccc; fill: #666; }
.playback { display: flex; gap: 15px; align-items: center; width: 180px; padding: 8px 0 0 13px; flex: none; }
.playback svg { width: 16px; height: 18px; }
.features { display: flex; padding-top: 17px; flex: none; }
.features li { width: 30px; height: 34px; border-bottom: 2px solid #c6c6c6; display: flex; flex-direction: column; justify-content: space-between; align-items: flex-start; }
.features li::after { content: ""; width: 3px; height: 7px; margin-left: 13px; background: #c6c6c6; }
.features svg { width: 22px; height: 22px; margin-left: 1px; }
.features li:last-child { width: 17px; }
.features .folded { position: relative; }
.badge { position: absolute; left: 5px; top: 26px; width: 13px; height: 13px; background: #777; color: #fff; font-size: 14px; font-weight: 700; line-height: 13px; text-align: center; }
.marker { padding-top: 11px; margin-left: 3px; }
.settings { margin: 8px 16px 0 auto; }
.hscroll { position: absolute; right: 7px; top: 0; width: 272px; height: 8px; background: #c6c6c6; border-radius: 0 0 3px 3px; }
```

FILE: app.js
```js
// Timeline features in modelling order, each named after its icon.
const features = (
  "extrude combine jointorigin sketch extrude jointorigin jointorigin jointorigin move flag " +
  "sketch revolve sketch extrude move move sketch plane plane sketch revolve sketch extrude sketch " +
  "extrude sketch extrude sketch extrude circular sketch extrude sketch extrude sketch extrude " +
  "sketch extrude combine group combine jointorigin copies move jointorigin component copies move " +
  "sketch extrude jointorigin sketch extrude component jointorigin sketch"
).split(" ");

document.getElementById("features").innerHTML = features.map(name =>
  `<li${name === "group" ? ' class="folded"' : ""}><button aria-label="${name}"><svg><use href="#i-${name}"/></svg></button>` +
  `${name === "group" ? '<span class="badge">+</span>' : ""}</li>`
).join("");

// Ruler labels every 50 mm along the front edge of the ground grid.
let labels = "";
for (let k = -25; k <= 33; k++) {
  const x = Math.round(820 + 32.65 * k);
  const y = Math.round(849 - 0.0178 * x);
  labels += `<text transform="translate(${Math.max(x, 4)} ${y}) rotate(90)">${Math.abs(k * 50)}</text>`;
}
// Side ruler: only the last digits of each label reach into view.
["0", "0", "0", "0", "00", "50", "00", "50", "00"].forEach((digits, j) => {
  labels += `<text x="1" y="${745 + j * 12}">${digits}</text>`;
});
document.getElementById("ruler").innerHTML = labels;
```
